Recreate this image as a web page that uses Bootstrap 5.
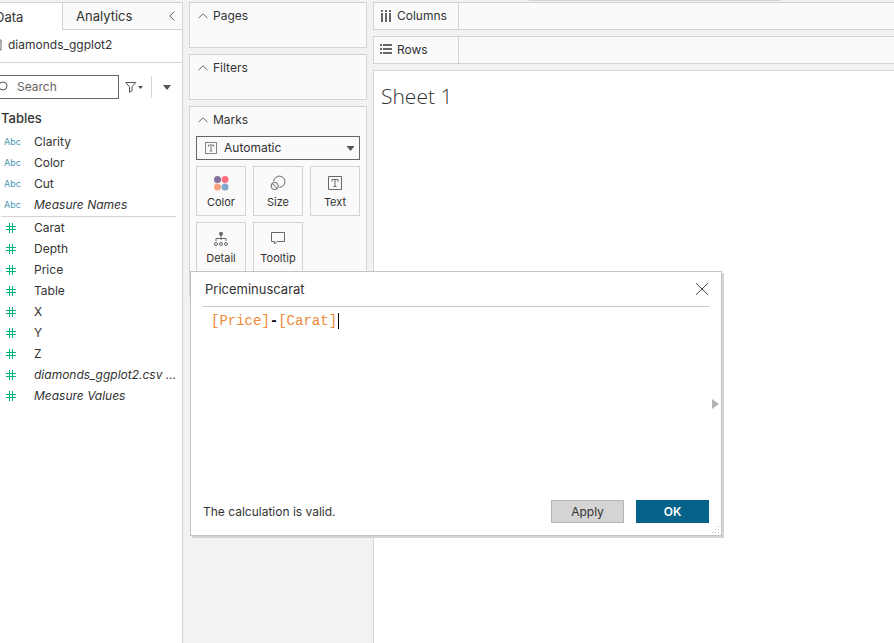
<!DOCTYPE html>
<html lang="en">
<head>
<meta charset="utf-8">
<meta name="viewport" content="width=device-width, initial-scale=1">
<title>Sheet 1</title>
<link href="https://cdn.jsdelivr.net/npm/bootstrap@5.3.0/dist/css/bootstrap.min.css" rel="stylesheet">
<style>
:root { --line: #d4d4d4; --ink: #333; --panel: #fafafa; }
body { font: 12px/20px Inter, "Liberation Sans", sans-serif; color: var(--ink); background: #f2f2f2; }
svg { display: block; flex: none; }
button { font: inherit; color: inherit; background: none; border: 0; padding: 0; }
h1, h2 { font: inherit; margin: 0; }
.line { border: 1px solid var(--line); }
.topstrip { height: 2px; }
.topstrip div { width: 252px; height: 1px; margin-left: 529px; background: var(--line); }
.workspace { gap: 6px; }
.data-pane { width: 183px; border-right: 1px solid var(--line); border-top: 1px solid var(--line); }
.pane-tabs { height: 27px; font-size: 13px; }
.pane-tabs .current { text-align: left; margin-left: -5px; width: 67px; }
.pane-tabs .other { background: var(--panel); border-left: 1px solid var(--line); border-bottom: 1px solid var(--line); padding: 0 7px 0 13px; }
.source { height: 33px; border-bottom: 1px solid var(--line); padding-bottom: 3px; gap: 6px; }
.search { width: 121px; height: 24px; margin-left: -2px; border: 1px solid #666; }
.search input { border: 0; outline: 0; padding: 0 0 0 9px; width: 90px; background: none; line-height: 20px; }
.search input::placeholder { color: #666; }
.tools { padding-top: 12px; gap: 6px; }
.divider { width: 1px; height: 22px; background: var(--line); margin: 0 5px 0 1px; }
.tables-title { font-size: 13px; font-weight: 500; padding: 9px 0 3px 1px; }
.fields { list-style: none; margin: 0; padding: 0; }
.fields li { height: 21px; display: flex; align-items: center; }
.fields .kind { width: 30px; padding-left: 4px; font-size: 9px; color: #4996b2; flex: none; margin-right: 4px; }
.measures { border-top: 1px solid var(--line); margin: 1px 6px 0 1px; }
.measures .kind { width: 28px; padding-left: 5px; margin-right: 5px; }
.shelves { width: 178px; gap: 6px; }
.shelf { background: var(--panel); min-height: 46px; padding: 3px 6px 0; }
.shelf-title { gap: 5px; padding-left: 2px; }
.marks { min-height: 191px; }
.mark-type { margin-top: 6px; }
.mark-type select { appearance: none; width: 100%; height: 24px; border: 1px solid #666; border-radius: 0; background: none; color: var(--ink); padding: 0 24px 0 27px; }
.mark-type .glyph { left: 9px; top: 6px; pointer-events: none; }
.mark-type .caret { right: 5px; top: 10px; pointer-events: none; }
.mark-grid { display: grid; grid-template-columns: repeat(3, 50px); gap: 6px 7px; margin-top: 6px; }
.mark-grid button { height: 50px; border: 1px solid var(--line); font-size: 11px; display: flex; flex-direction: column; align-items: center; padding-top: 8px; gap: 1px; }
.canvas-col { gap: 6px; min-width: 0; }
.drop { height: 28px; background: var(--panel); border: 1px solid var(--line); border-right: 0; }
.drop-name { width: 85px; border-right: 1px solid var(--line); padding-left: 6px; gap: 5px; }
.sheet { border: 1px solid var(--line); border-right: 0; border-bottom: 0; padding: 10px 7px; }
.sheet h1 { font: 300 21px/30px "Open Sans", "Liberation Sans", sans-serif; }
.calc { left: 190px; top: 271px; width: 532px; height: 265px; border: 1px solid #c4c4c4; box-shadow: 2px 2px 0 #d4d4d4; padding: 0 12px 12px; }
.calc-head { height: 35px; border-bottom: 1px solid #c4c4c4; padding: 0 0 0 2px; }
.calc-head h2 { font-size: 13px; }
.formula { font: 14px/20px "Liberation Mono", monospace; padding: 4px 0 0 8px; outline: 0; color: #000; }
.formula span { color: #ee8a3a; }
.formula i { display: inline-block; width: 1px; height: 16px; background: #000; vertical-align: -4px; margin-left: 1px; }
.calc-foot { gap: 12px; }
.calc-foot button { width: 73px; height: 23px; line-height: 20px; }
.apply { background: #d4d4d4; border: 1px solid #b4b4b4; }
.ok { background: #05628a; color: #fff; font-weight: 600; }
.expand { right: 2px; top: 127px; }
.grip { right: 1px; bottom: 1px; }
</style>
<script src="https://cdn.jsdelivr.net/npm/bootstrap@5.3.0/dist/js/bootstrap.bundle.min.js"></script>
</head>
<body class="vh-100 d-flex flex-column overflow-hidden position-relative">
<svg width="0" height="0" class="position-absolute" aria-hidden="true">
  <symbol id="hash" viewBox="0 0 10 10"><path d="M3.5 0v10M6.5 0v10M0 3.5h10M0 6.5h10" stroke="#00b180" fill="none"/></symbol>
  <symbol id="up" viewBox="0 0 10 6"><path d="M.5 5.2 5 .8l4.500 4.400" stroke="#666" fill="none"/></symbol>
  <symbol id="tbox" viewBox="0 0 14 14"><path d="M.5.5h13v13H.5z" stroke="#666" fill="none"/><path d="M4 5.500V3.500h6v2M7 3.500v7M5.500 10.500h3" stroke="#666" fill="none"/></symbol>
  <symbol id="down" viewBox="0 0 8 5"><path d="M0 0h8L4 5z" fill="#555"/></symbol>
</svg>
<div class="topstrip"><div></div></div>
<main class="workspace d-flex flex-grow-1">
  <aside class="data-pane bg-white flex-shrink-0 overflow-hidden">
    <div class="pane-tabs d-flex">
      <button class="current flex-shrink-0">Data</button>
      <div class="other d-flex flex-grow-1 align-items-center justify-content-between">
        <button>Analytics</button>
        <button aria-label="Collapse pane"><svg width="6" height="10"><path d="M5.300.5.8 5l4.500 4.500" stroke="#555" fill="none"/></svg></button>
      </div>
    </div>
    <div class="source d-flex align-items-center">
      <svg width="2" height="12"><path d="M0 1h1v10H0" stroke="#666" fill="none"/></svg>
      <span>diamonds_ggplot2</span>
    </div>
    <div class="tools d-flex align-items-center">
      <label class="search d-flex align-items-center flex-shrink-0">
        <svg width="9" height="12"><circle cx="4" cy="5" r="4" stroke="#555" fill="none"/></svg>
        <input type="text" placeholder="Search" aria-label="Search">
      </label>
      <button aria-label="Filter fields"><svg width="19" height="12"><path d="M.8 1.500h9.900L7 5.800v4l-2.500 1.500V5.800z" stroke="#555" fill="none"/><path d="M13 5h5l-2.500 3z" fill="#555"/></svg></button>
      <span class="divider"></span>
      <button aria-label="View options"><svg width="8" height="5"><use href="#down"/></svg></button>
    </div>
    <h2 class="tables-title">Tables</h2>
    <ul class="fields">
      <li><span class="kind">Abc</span>Clarity</li>
      <li><span class="kind">Abc</span>Color</li>
      <li><span class="kind">Abc</span>Cut</li>
      <li><span class="kind">Abc</span><em>Measure Names</em></li>
    </ul>
    <ul class="fields measures">
      <li><span class="kind"><svg width="10" height="10"><use href="#hash"/></svg></span>Carat</li>
      <li><span class="kind"><svg width="10" height="10"><use href="#hash"/></svg></span>Depth</li>
      <li><span class="kind"><svg width="10" height="10"><use href="#hash"/></svg></span>Price</li>
      <li><span class="kind"><svg width="10" height="10"><use href="#hash"/></svg></span>Table</li>
      <li><span class="kind"><svg width="10" height="10"><use href="#hash"/></svg></span>X</li>
      <li><span class="kind"><svg width="10" height="10"><use href="#hash"/></svg></span>Y</li>
      <li><span class="kind"><svg width="10" height="10"><use href="#hash"/></svg></span>Z</li>
      <li><span class="kind"><svg width="10" height="10"><use href="#hash"/></svg></span><em class="text-nowrap">diamonds_ggplot2.csv ...</em></li>
      <li><span class="kind"><svg width="10" height="10"><use href="#hash"/></svg></span><em>Measure Values</em></li>
    </ul>
  </aside>
  <section class="shelves d-flex flex-column flex-shrink-0">
    <div class="shelf line"><h2 class="shelf-title d-flex align-items-center"><svg width="10" height="6"><use href="#up"/></svg>Pages</h2></div>
    <div class="shelf line"><h2 class="shelf-title d-flex align-items-center"><svg width="10" height="6"><use href="#up"/></svg>Filters</h2></div>
    <div class="shelf marks line">
      <h2 class="shelf-title d-flex align-items-center"><svg width="10" height="6"><use href="#up"/></svg>Marks</h2>
      <div class="mark-type position-relative">
        <select aria-label="Mark type"><option>Automatic</option></select>
        <svg class="glyph position-absolute" width="12" height="12"><use href="#tbox"/></svg>
        <svg class="caret position-absolute" width="9" height="5"><use href="#down"/></svg>
      </div>
      <div class="mark-grid">
        <button><svg width="16" height="16"><circle cx="4.500" cy="4.500" r="3.500" fill="#83709c"/><circle cx="12" cy="4.500" r="3.500" fill="#fc6f7d"/><circle cx="4.500" cy="12" r="3.500" fill="#f5a37c"/><circle cx="12" cy="12" r="3.500" fill="#83a6cd"/></svg>Color</button>
        <button><svg width="16" height="16" fill="none" stroke="#666"><path d="M3.700 6.500A5.600 5.600 0 1 1 9.300 12.300"/><circle cx="4.700" cy="11" r="3.600"/><path d="m2.200 8.500 5 5"/></svg>Size</button>
        <button><svg width="16" height="16" viewBox="-1 -1 16 16"><use href="#tbox" width="14" height="14"/></svg>Text</button>
        <button><svg width="16" height="16" fill="none" stroke="#666"><circle cx="8" cy="2.700" r="2" fill="#666" stroke="none"/><path d="M8 4v5M3 10V7.500h10V10"/><circle cx="3" cy="13" r="1.500"/><circle cx="8" cy="13" r="1.500"/><circle cx="13" cy="13" r="1.500"/></svg>Detail</button>
        <button><svg width="16" height="16"><path d="M1.500 1.500h13v9H7L4.500 13v-2.500h-3z" fill="none" stroke="#666"/></svg>Tooltip</button>
      </div>
    </div>
  </section>
  <section class="canvas-col d-flex flex-column flex-grow-1">
    <div class="drop d-flex"><div class="drop-name d-flex align-items-center"><svg width="12" height="12" fill="#666"><path d="M1 0h2v2H1zM5 0h2v2H5zM9 0h2v2H9zM1 3h2v9H1zM5 3h2v9H5zM9 3h2v9H9z"/></svg>Columns</div></div>
    <div class="drop d-flex"><div class="drop-name d-flex align-items-center"><svg width="12" height="12" fill="#666"><path d="M0 0h2v2H0zM0 4h2v2H0zM0 8h2v2H0zM3 0h9v2H3zM3 4h9v2H3zM3 8h9v2H3z"/></svg>Rows</div></div>
    <div class="sheet bg-white flex-grow-1"><h1>Sheet 1</h1></div>
  </section>
</main>
<section class="calc position-absolute bg-white d-flex flex-column" role="dialog" aria-label="Priceminuscarat">
  <div class="calc-head d-flex align-items-center justify-content-between">
    <h2>Priceminuscarat</h2>
    <button aria-label="Close"><svg width="14" height="12"><path d="M1 .2 13 11.800M13 .2 1 11.800" stroke="#444" fill="none"/></svg></button>
  </div>
  <div class="formula flex-grow-1" role="textbox" aria-label="Formula" contenteditable="true" spellcheck="false"><span>[Price]</span><b>-</b><span>[Carat]</span><i></i></div>
  <div class="calc-foot d-flex align-items-center">
    <span class="flex-grow-1">The calculation is valid.</span>
    <button class="apply">Apply</button>
    <button class="ok">OK</button>
  </div>
  <button class="expand position-absolute" aria-label="Show functions"><svg width="7" height="10"><path d="M0 0v10l7-5z" fill="#b4b4b4"/></svg></button>
  <svg class="grip position-absolute" width="8" height="8" fill="#b4b4b4"><path d="M6 0h1v1H6zM3 3h1v1H3zM6 3h1v1H6zM0 6h1v1H0zM3 6h1v1H3zM6 6h1v1H6z"/></svg>
</section>
</body>
</html>
